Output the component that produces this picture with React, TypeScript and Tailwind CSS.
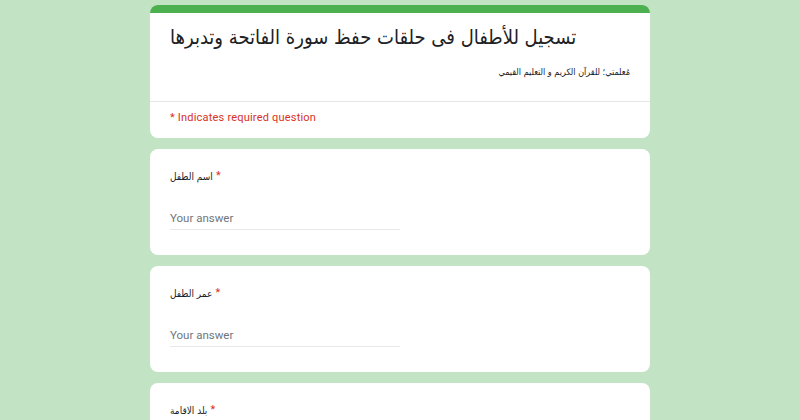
import React from 'react';

const questions = ['اسم الطفل', 'عمر الطفل', 'بلد الاقامة'];

const arabic = "font-['DejaVu_Sans_Condensed','DejaVu_Sans',sans-serif]";

function QuestionCard({ label }: { label: string }) {
    return (
        <div className="bg-white rounded-lg px-5 pt-[18px] pb-[25px]">
            <div className="h-[18px] flex items-center text-[10px] text-[#202124]">
                <span className={arabic}>{label}</span>
                <span className="text-[#d93025] ml-[3px] text-[11px] font-['Roboto',sans-serif]">*</span>
            </div>
            <div className="mt-[25px] w-[230px] border-b border-[#e8e8e8] pb-px">
                <div className="h-[18px] flex items-center text-[11.5px] text-[#70757a] font-['Roboto',sans-serif]">
                    Your answer
                </div>
            </div>
        </div>
    );
}

export default function App() {
    return (
        <div className="min-h-screen bg-[#c2e3c4] pt-[5px] pb-6">
            <div className="w-[500px] mx-auto flex flex-col gap-[11px]">
                {/* header card */}
                <div className="bg-white rounded-lg overflow-hidden">
                    <div className="h-[8px] bg-[#4caf50]" />
                    <div className="px-5 pt-[8px] pb-[21px]">
                        <div className={`h-[32px] flex items-center text-[20px] text-[#202124] ${arabic}`}>
                            تسجيل للأطفال فى حلقات حفظ سورة الفاتحة وتدبرها
                        </div>
                        <div dir="rtl" className={`mt-[13px] h-[14px] flex items-center text-[9px] text-[#202124] ${arabic}`}>
                            مُعلمتي؛ للقرآن الكريم و التعليم القيمي
                        </div>
                    </div>
                    <div className="border-t border-[#e5e5e5] px-5 pt-[8px] pb-[12px]">
                        <div className="h-[16px] flex items-center text-[11px] text-[#d93025] tracking-[0.2px] font-['Roboto',sans-serif]">
                            * Indicates required question
                        </div>
                    </div>
                </div>
                {questions.map((q) => (
                    <QuestionCard key={q} label={q} />
                ))}
            </div>
        </div>
    );
}
